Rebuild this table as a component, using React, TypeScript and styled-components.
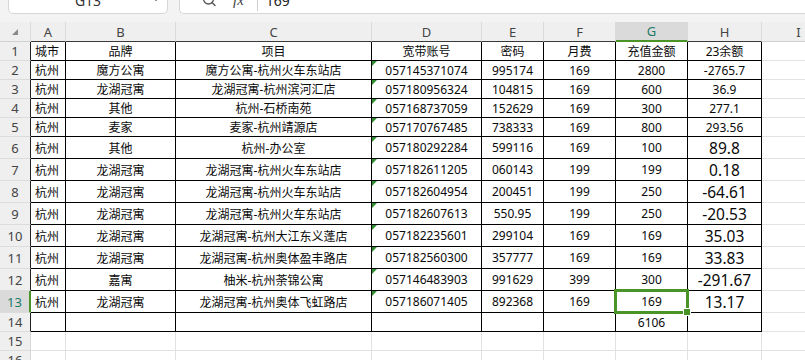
import React from "react";
import styled, { createGlobalStyle, css } from "styled-components";

const GlobalStyle = createGlobalStyle`
  html, body { margin: 0; padding: 0; background: #ffffff; overflow: hidden; }
  body { font-family: "Noto Sans", "Noto Sans CJK SC", sans-serif; color: #111; }
`;

const Page = styled.div`
  width: 805px;
  height: 360px;
  overflow: hidden;
  display: flex;
  flex-direction: column;
  background: #f3f3f3;
`;

const TopBar = styled.div`
  display: flex;
  align-items: stretch;
  gap: 11px;
  margin-top: -14px;
  padding: 0 0 8px 8px;
  background: #f3f3f3;
  flex: 0 0 auto;
`;

const NameBox = styled.div`
  position: relative;
  width: 160px;
  height: 28px;
  box-sizing: border-box;
  background: #fff;
  border: 1px solid #d6d6d6;
  border-radius: 5px;
  display: flex;
  align-items: center;
  justify-content: center;
  font-size: 14px;
  color: #333;
`;

const Chevron = styled.svg`
  position: absolute;
  right: 6px;
  top: 8px;
`;

const FormulaBox = styled.div`
  flex: 1;
  height: 28px;
  box-sizing: border-box;
  background: #fff;
  border: 1px solid #d6d6d6;
  border-right: none;
  border-radius: 5px 0 0 5px;
  display: flex;
  align-items: center;
  padding-left: 21px;
  font-size: 14px;
  color: #333;
`;

const IconSlot = styled.div`
  width: 16px;
  height: 16px;
  display: flex;
  align-items: center;
  justify-content: center;
`;

const Fx = styled.span`
  margin-left: 16px;
  font-family: "Liberation Serif", serif;
  font-style: italic;
  font-size: 15px;
  color: #444;
`;

const Sep = styled.div`
  width: 1px;
  height: 22px;
  background: #cfcfcf;
  margin: 0 8px 0 13px;
`;

const FormulaText = styled.span`
  font-size: 14px;
  color: #222;
`;

const Sheet = styled.div`
  flex: 1;
  display: grid;
  grid-template-columns: 31px 35px 110px 196px 110px 62px 72px 72px 74px 74px 1fr;
  grid-template-rows: 20px repeat(5, 19px) repeat(8, 22px) repeat(3, 19px);
  background: #fff;
`;

const headBase = css`
  box-sizing: border-box;
  display: flex;
  align-items: center;
  justify-content: center;
  font-size: 13px;
  color: #444;
  background: #efefef;
`;

const Corner = styled.div`
  ${headBase};
  border-right: 1px solid #dadada;
  border-bottom: 1px solid #d0d0d0;
`;

const ColHead = styled.div<{ $active?: boolean; $table?: boolean }>`
  ${headBase};
  border-right: 1px solid #dadada;
  border-bottom: 1px solid ${(p) => (p.$table ? "#3a3a3a" : "#d0d0d0")};
  ${(p) =>
    p.$active &&
    css`
      background: #dadada;
      color: #1e7b68;
      border-bottom: 2px solid #4a9427;
    `}
`;

const RowHead = styled.div<{ $active?: boolean; $table?: boolean }>`
  ${headBase};
  border-bottom: 1px solid #dcdcdc;
  border-right: 1px solid ${(p) => (p.$table ? "#222" : "#d6d6d6")};
  ${(p) =>
    p.$active &&
    css`
      background: #dadada;
      color: #1e7b68;
      border-right: 2px solid #4a9427;
    `}
`;

const Cell = styled.div<{ $table?: boolean; $left?: boolean; $big?: boolean }>`
  position: relative;
  box-sizing: border-box;
  display: flex;
  align-items: center;
  justify-content: ${(p) => (p.$left ? "flex-start" : "center")};
  padding: ${(p) => (p.$left ? "0 0 0 4px" : "0 2px")};
  white-space: nowrap;
  overflow: visible;
  font-size: ${(p) => (p.$big ? "15.5px" : "12px")};
  color: #0a0a0a;
  border-right: 1px solid ${(p) => (p.$table ? "#000" : "#e2e2e2")};
  border-bottom: 1px solid ${(p) => (p.$table ? "#000" : "#e2e2e2")};
`;

const TextMark = styled.span`
  position: absolute;
  left: 0;
  top: 0;
  width: 0;
  height: 0;
  border-top: 5px solid #2f8f2f;
  border-right: 5px solid transparent;
`;

const Selection = styled.div`
  position: absolute;
  left: -2px;
  top: -2px;
  right: -2px;
  bottom: -2px;
  border: 3px solid #4a9427;
  pointer-events: none;
  z-index: 2;
`;

const Handle = styled.div`
  position: absolute;
  right: -5px;
  bottom: -5px;
  width: 6px;
  height: 6px;
  background: #4a9427;
  border: 1px solid #fff;
`;

const LETTERS = ["A", "B", "C", "D", "E", "F", "G", "H", "I"];

const DATA: string[][] = [
  ["城市", "品牌", "项目", "宽带账号", "密码", "月费", "充值金额", "23余额"],
  ["杭州", "魔方公寓", "魔方公寓-杭州火车东站店", "057145371074", "995174", "169", "2800", "-2765.7"],
  ["杭州", "龙湖冠寓", "龙湖冠寓-杭州滨河汇店", "057180956324", "104815", "169", "600", "36.9"],
  ["杭州", "其他", "杭州-石桥南苑", "057168737059", "152629", "169", "300", "277.1"],
  ["杭州", "麦家", "麦家-杭州靖源店", "057170767485", "738333", "169", "800", "293.56"],
  ["杭州", "其他", "杭州-办公室", "057180292284", "599116", "169", "100", "89.8"],
  ["杭州", "龙湖冠寓", "龙湖冠寓-杭州火车东站店", "057182611205", "060143", "199", "199", "0.18"],
  ["杭州", "龙湖冠寓", "龙湖冠寓-杭州火车东站店", "057182604954", "200451", "199", "250", "-64.61"],
  ["杭州", "龙湖冠寓", "龙湖冠寓-杭州火车东站店", "057182607613", "550.95", "199", "250", "-20.53"],
  ["杭州", "龙湖冠寓", "龙湖冠寓-杭州大江东义蓬店", "057182235601", "299104", "169", "169", "35.03"],
  ["杭州", "龙湖冠寓", "龙湖冠寓-杭州奥体盈丰路店", "057182560300", "357777", "169", "169", "33.83"],
  ["杭州", "嘉寓", "柚米-杭州荼锦公寓", "057146483903", "991629", "399", "300", "-291.67"],
  ["杭州", "龙湖冠寓", "龙湖冠寓-杭州奥体飞虹路店", "057186071405", "892368", "169", "169", "13.17"],
  ["", "", "", "", "", "", "6106", ""],
];

const TOTAL_ROWS = 16;
const SEL_ROW = 13;
const SEL_COL = 6;

export default function App() {
  const rows: React.ReactNode[] = [];
  for (let r = 1; r <= TOTAL_ROWS; r++) {
    const inTable = r <= 14;
    rows.push(
      <RowHead key={`rh${r}`} $active={r === SEL_ROW} $table={inTable}>
        {r}
      </RowHead>
    );
    for (let c = 0; c < 9; c++) {
      const table = inTable && c <= 7;
      const value = inTable && c <= 7 ? DATA[r - 1][c] : "";
      const big = c === 7 && r >= 6 && r <= 13;
      rows.push(
        <Cell key={`c${r}-${c}`} $table={table} $left={c === 0} $big={big}>
          {c === 3 && r >= 2 && r <= 13 && <TextMark />}
          {value}
          {r === SEL_ROW && c === SEL_COL && (
            <Selection>
              <Handle />
            </Selection>
          )}
        </Cell>
      );
    }
    rows.push(<Cell key={`f${r}`} />);
  }

  return (
    <>
      <GlobalStyle />
      <Page>
        <TopBar>
          <NameBox>
            G13
            <Chevron width="10" height="8" viewBox="0 0 10 8">
              <path d="M1.5 2 L5 5.5 L8.5 2" fill="none" stroke="#777" strokeWidth="1.2" />
            </Chevron>
          </NameBox>
          <FormulaBox>
            <IconSlot>
              <svg width="16" height="16" viewBox="0 0 16 16">
                <circle cx="7.5" cy="7" r="5" fill="none" stroke="#555" strokeWidth="1.3" />
                <path d="M5.2 7 H9.8" stroke="#555" strokeWidth="1.3" />
                <path d="M11 10.6 L14 13.6" stroke="#555" strokeWidth="1.4" strokeLinecap="round" />
              </svg>
            </IconSlot>
            <Fx>fx</Fx>
            <Sep />
            <FormulaText>169</FormulaText>
          </FormulaBox>
        </TopBar>
        <Sheet>
          <Corner>
            <svg width="8" height="8" viewBox="0 0 8 8">
              <path d="M7 1 L7 7 L1 7 Z" fill="#8a8a8a" />
            </svg>
          </Corner>
          {LETTERS.map((l, i) => (
            <ColHead key={l} $active={i === SEL_COL} $table={i <= 7}>
              {l}
            </ColHead>
          ))}
          <ColHead />
          {rows}
        </Sheet>
      </Page>
    </>
  );
}
